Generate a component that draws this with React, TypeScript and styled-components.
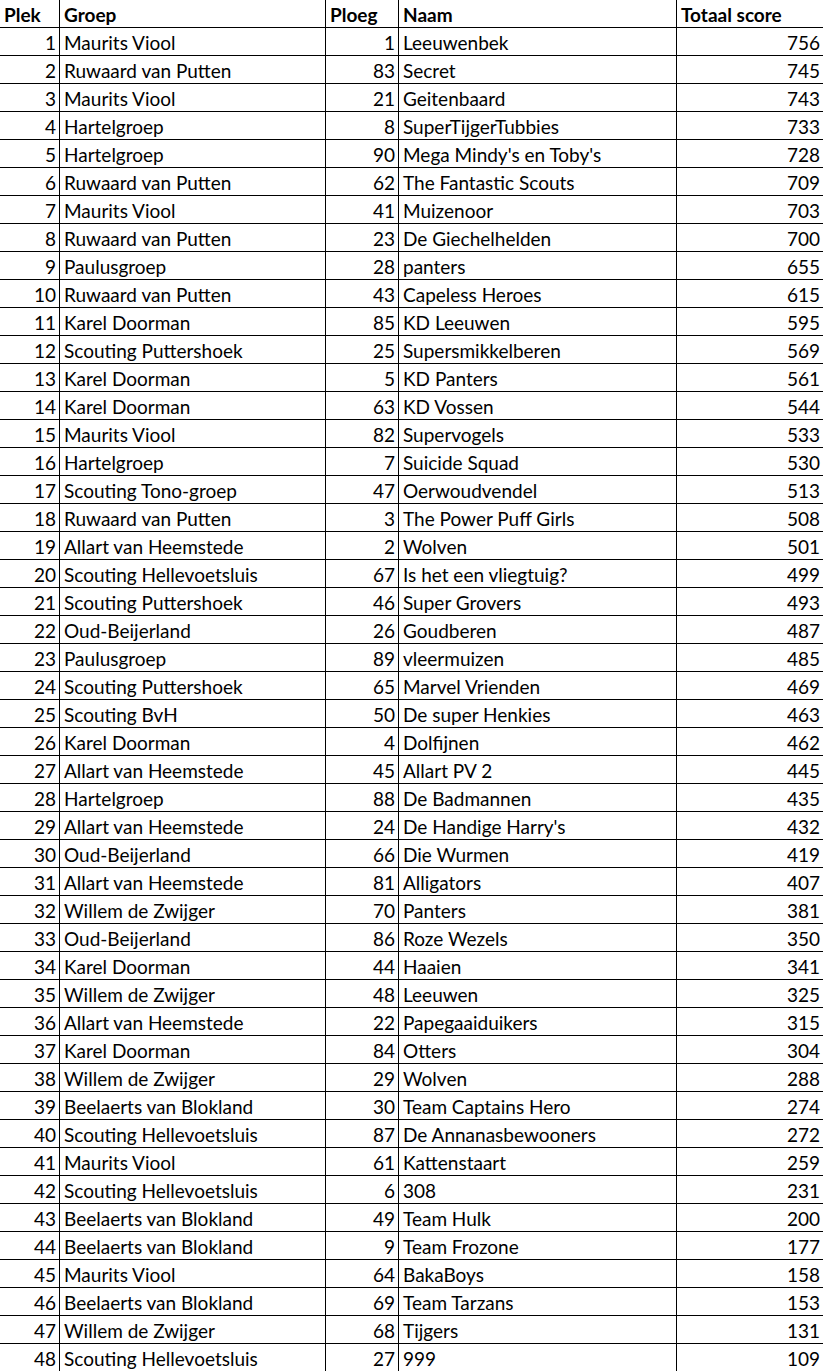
import styled, { createGlobalStyle } from "styled-components";

type Entry = [number, string, number, string, number];

const rows: Entry[] = [
  [1, "Maurits Viool", 1, "Leeuwenbek", 756],
  [2, "Ruwaard van Putten", 83, "Secret", 745],
  [3, "Maurits Viool", 21, "Geitenbaard", 743],
  [4, "Hartelgroep", 8, "SuperTijgerTubbies", 733],
  [5, "Hartelgroep", 90, "Mega Mindy's en Toby's", 728],
  [6, "Ruwaard van Putten", 62, "The Fantastic Scouts", 709],
  [7, "Maurits Viool", 41, "Muizenoor", 703],
  [8, "Ruwaard van Putten", 23, "De Giechelhelden", 700],
  [9, "Paulusgroep", 28, "panters", 655],
  [10, "Ruwaard van Putten", 43, "Capeless Heroes", 615],
  [11, "Karel Doorman", 85, "KD Leeuwen", 595],
  [12, "Scouting Puttershoek", 25, "Supersmikkelberen", 569],
  [13, "Karel Doorman", 5, "KD Panters", 561],
  [14, "Karel Doorman", 63, "KD Vossen", 544],
  [15, "Maurits Viool", 82, "Supervogels", 533],
  [16, "Hartelgroep", 7, "Suicide Squad", 530],
  [17, "Scouting Tono-groep", 47, "Oerwoudvendel", 513],
  [18, "Ruwaard van Putten", 3, "The Power Puff Girls", 508],
  [19, "Allart van Heemstede", 2, "Wolven", 501],
  [20, "Scouting Hellevoetsluis", 67, "Is het een vliegtuig?", 499],
  [21, "Scouting Puttershoek", 46, "Super Grovers", 493],
  [22, "Oud-Beijerland", 26, "Goudberen", 487],
  [23, "Paulusgroep", 89, "vleermuizen", 485],
  [24, "Scouting Puttershoek", 65, "Marvel Vrienden", 469],
  [25, "Scouting BvH", 50, "De super Henkies", 463],
  [26, "Karel Doorman", 4, "Dolfijnen", 462],
  [27, "Allart van Heemstede", 45, "Allart PV 2", 445],
  [28, "Hartelgroep", 88, "De Badmannen", 435],
  [29, "Allart van Heemstede", 24, "De Handige Harry's", 432],
  [30, "Oud-Beijerland", 66, "Die Wurmen", 419],
  [31, "Allart van Heemstede", 81, "Alligators", 407],
  [32, "Willem de Zwijger", 70, "Panters", 381],
  [33, "Oud-Beijerland", 86, "Roze Wezels", 350],
  [34, "Karel Doorman", 44, "Haaien", 341],
  [35, "Willem de Zwijger", 48, "Leeuwen", 325],
  [36, "Allart van Heemstede", 22, "Papegaaiduikers", 315],
  [37, "Karel Doorman", 84, "Otters", 304],
  [38, "Willem de Zwijger", 29, "Wolven", 288],
  [39, "Beelaerts van Blokland", 30, "Team Captains Hero", 274],
  [40, "Scouting Hellevoetsluis", 87, "De Annanasbewooners", 272],
  [41, "Maurits Viool", 61, "Kattenstaart", 259],
  [42, "Scouting Hellevoetsluis", 6, "308", 231],
  [43, "Beelaerts van Blokland", 49, "Team Hulk", 200],
  [44, "Beelaerts van Blokland", 9, "Team Frozone", 177],
  [45, "Maurits Viool", 64, "BakaBoys", 158],
  [46, "Beelaerts van Blokland", 69, "Team Tarzans", 153],
  [47, "Willem de Zwijger", 68, "Tijgers", 131],
  [48, "Scouting Hellevoetsluis", 27, "999", 109],
];

const headers = ["Plek", "Groep", "Ploeg", "Naam", "Totaal score"];

const GlobalStyle = createGlobalStyle`
  body {
    margin: 0;
    background: #fff;
    font-family: Lato, "Liberation Sans", sans-serif;
    color: #000;
  }
`;

const Sheet = styled.div`
  display: grid;
  grid-template-columns: 60px 266px 73px 278px 146px;
  grid-auto-rows: 28px;
  width: 823px;
  overflow: hidden;
`;

const Cell = styled.div<{ $num?: boolean; $head?: boolean; $last?: boolean }>`
  box-sizing: border-box;
  display: flex;
  align-items: flex-end;
  justify-content: ${(p) => (p.$num ? "flex-end" : "flex-start")};
  padding: 0 3px 3px 4px;
  border-bottom: 1px solid #000;
  border-right: ${(p) => (p.$last ? "none" : "1px solid #000")};
  font-size: 19px;
  line-height: 1;
  font-weight: ${(p) => (p.$head ? 700 : 400)};
  white-space: nowrap;
  overflow: hidden;
`;

const numCols = [true, false, true, false, true];

export default function App() {
  return (
    <>
      <GlobalStyle />
      <Sheet>
        {headers.map((h, i) => (
          <Cell key={h} $head $last={i === 4}>
            {h}
          </Cell>
        ))}
        {rows.map((r) =>
          r.map((v, i) => (
            <Cell key={`${r[0]}-${i}`} $num={numCols[i]} $last={i === 4}>
              {v}
            </Cell>
          ))
        )}
      </Sheet>
    </>
  );
}
